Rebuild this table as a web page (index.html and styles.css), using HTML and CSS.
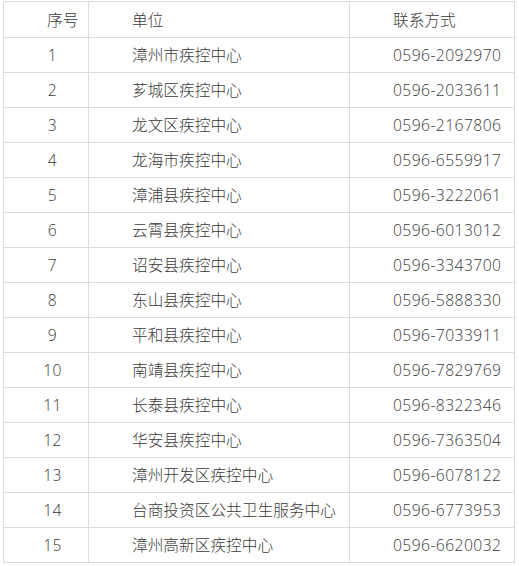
FILE: index.html
```html
<!DOCTYPE html>
<html lang="zh">
<head>
<meta charset="utf-8">
<link rel="stylesheet" href="styles.css">
</head>
<body>
<table class="contacts">
  <colgroup>
    <col class="c-no"><col class="c-unit"><col class="c-tel">
  </colgroup>
  <thead>
    <tr><th class="h-no">序号</th><th>单位</th><th>联系方式</th></tr>
  </thead>
  <tbody>
    <tr><td class="n">1</td><td>漳州市疾控中心</td><td class="t">0596-2092970</td></tr>
    <tr><td class="n">2</td><td>芗城区疾控中心</td><td class="t">0596-2033611</td></tr>
    <tr><td class="n">3</td><td>龙文区疾控中心</td><td class="t">0596-2167806</td></tr>
    <tr><td class="n">4</td><td>龙海市疾控中心</td><td class="t">0596-6559917</td></tr>
    <tr><td class="n">5</td><td>漳浦县疾控中心</td><td class="t">0596-3222061</td></tr>
    <tr><td class="n">6</td><td>云霄县疾控中心</td><td class="t">0596-6013012</td></tr>
    <tr><td class="n">7</td><td>诏安县疾控中心</td><td class="t">0596-3343700</td></tr>
    <tr><td class="n">8</td><td>东山县疾控中心</td><td class="t">0596-5888330</td></tr>
    <tr><td class="n">9</td><td>平和县疾控中心</td><td class="t">0596-7033911</td></tr>
    <tr><td class="n">10</td><td>南靖县疾控中心</td><td class="t">0596-7829769</td></tr>
    <tr><td class="n">11</td><td>长泰县疾控中心</td><td class="t">0596-8322346</td></tr>
    <tr><td class="n">12</td><td>华安县疾控中心</td><td class="t">0596-7363504</td></tr>
    <tr><td class="n">13</td><td>漳州开发区疾控中心</td><td class="t">0596-6078122</td></tr>
    <tr><td class="n">14</td><td>台商投资区公共卫生服务中心</td><td class="t">0596-6773953</td></tr>
    <tr><td class="n">15</td><td>漳州高新区疾控中心</td><td class="t">0596-6620032</td></tr>
  </tbody>
</table>
</body>
</html>
```
FILE: styles.css
```css
html, body {
  margin: 0;
  padding: 0;
  background: #fff;
}
body {
  padding: 1px 0 0 3px;
  font-family: "Open Sans", "Noto Sans CJK SC", sans-serif;
  font-size: 15.7px;
  font-weight: 300;
  color: #3a3a3a;
}
.contacts {
  border-collapse: collapse;
  table-layout: fixed;
  width: 511px;
}
.contacts col.c-no { width: 85px; }
.contacts col.c-unit { width: 261px; }
.contacts col.c-tel { width: 165px; }
.contacts th,
.contacts td {
  box-sizing: border-box;
  border: 1px solid #dcdcdc;
  padding: 0 0 0 43px;
  height: 35px;
  text-align: left;
  font-weight: 300;
  white-space: nowrap;
  vertical-align: middle;
  line-height: 20px;
}
.contacts thead th {
  height: 36px;
}
.contacts td.n {
  padding-left: 13px;
  text-align: center;
  letter-spacing: 0.4px;
}
.contacts td.t {
  letter-spacing: 0.4px;
}
```
